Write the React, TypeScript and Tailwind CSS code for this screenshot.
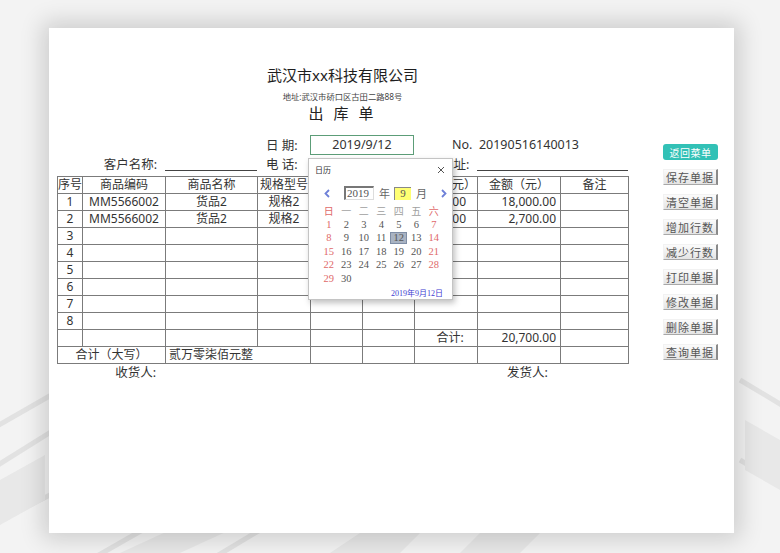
import React from "react";

type Row = {
  no: string;
  code?: string;
  name?: string;
  spec?: string;
  unit?: string;
  qty?: string;
  price?: string;
  amt?: string;
};

const rows: Row[] = [
  { no: "1", code: "MM5566002", name: "货品2", spec: "规格2", unit: "个", qty: "20", price: "900.00", amt: "18,000.00" },
  { no: "2", code: "MM5566002", name: "货品2", spec: "规格2", unit: "个", qty: "3", price: "900.00", amt: "2,700.00" },
  { no: "3" },
  { no: "4" },
  { no: "5" },
  { no: "6" },
  { no: "7" },
  { no: "8" },
];

const gridCols = "grid grid-cols-[25px_83px_92px_53px_52px_52px_63px_83px_68px]";

function Cell({ children, className = "" }: { children?: React.ReactNode; className?: string }) {
  return (
    <div className={`h-[17px] border-r border-b border-[#7b7b7b] flex items-center justify-center overflow-hidden whitespace-nowrap ${className}`}>
      {children}
    </div>
  );
}

const days: (number | null)[] = [
  1, 2, 3, 4, 5, 6, 7,
  8, 9, 10, 11, 12, 13, 14,
  15, 16, 17, 18, 19, 20, 21,
  22, 23, 24, 25, 26, 27, 28,
  29, 30, null, null, null, null, null,
];

function Calendar() {
  return (
    <div className="absolute left-[259px] top-[130px] w-[145px] h-[142px] bg-white border border-[#c4c4c4] shadow-[2px_3px_6px_rgba(0,0,0,0.25)] z-10 font-['Liberation_Serif','Noto_Sans_CJK_SC',serif]">
      {/* title bar */}
      <div className="h-[23px] flex items-center justify-between pl-[6px] pr-[6px] pb-[2px]">
        <span className="text-[8px] text-[#333] font-['Noto_Sans_CJK_SC',sans-serif]">日历</span>
        <svg width="8" height="8" viewBox="0 0 8 8" className="mr-[1px]">
          <path d="M1 1 L7 7 M7 1 L1 7" stroke="#555" strokeWidth="1" />
        </svg>
      </div>
      {/* year / month nav */}
      <div className="h-[22px] flex items-center pl-[15px] text-[11px] text-[#555]">
        <svg width="6" height="9" viewBox="0 0 6 9">
          <path d="M5 1 L1.5 4.5 L5 8" stroke="#6e80d8" strokeWidth="1.8" fill="none" />
        </svg>
        <div className="ml-[14px] w-[30px] h-[14px] border-t-2 border-l-2 border-[#777] border-r border-b border-r-[#ddd] border-b-[#ddd] flex items-center pl-[1px] leading-none">2019</div>
        <span className="ml-[5px] text-[11px] font-['Noto_Sans_CJK_SC',sans-serif] text-[#666]">年</span>
        <div className="ml-[4px] w-[17px] h-[13px] bg-[#ffff73] border-t border-l border-[#888] flex items-center justify-center leading-none">9</div>
        <span className="ml-[5px] text-[11px] font-['Noto_Sans_CJK_SC',sans-serif] text-[#666]">月</span>
        <svg width="6" height="9" viewBox="0 0 6 9" className="ml-[14px]">
          <path d="M1 1 L4.5 4.5 L1 8" stroke="#6e80d8" strokeWidth="1.8" fill="none" />
        </svg>
      </div>
      {/* weekdays */}
      <div className="ml-[11px] mt-[1px] grid grid-cols-[repeat(7,17.5px)] h-[12px] items-center text-[10px] font-['Noto_Sans_CJK_SC',sans-serif]">
        {["日", "一", "二", "三", "四", "五", "六"].map((w, i) => (
          <div key={w} className={`text-center leading-none ${i === 0 || i === 6 ? "text-[#e06a6a]" : "text-[#a0a0a0]"}`}>
            {w}
          </div>
        ))}
      </div>
      {/* days */}
      <div className="ml-[11px] mt-[1px] grid grid-cols-[repeat(7,17.5px)] auto-rows-[13.5px] text-[10.5px]">
        {days.map((d, i) => {
          const weekend = i % 7 === 0 || i % 7 === 6;
          return (
            <div key={i} className="flex items-center justify-center">
              {d === 12 ? (
                <span className="w-[17px] h-[12px] bg-[#a9b3c2] border border-[#7f8ea6] flex items-center justify-center text-[#555] leading-none">{d}</span>
              ) : (
                <span className={`leading-none ${weekend ? "text-[#e06a6a]" : "text-[#555]"}`}>{d ?? ""}</span>
              )}
            </div>
          );
        })}
      </div>
      <div className="mt-[2px] pr-[9px] text-right text-[8px] text-[#3d3dd1] leading-[12px]">2019年9月12日</div>
    </div>
  );
}

const btn =
  "w-[55px] h-[16px] flex items-center justify-center text-[11px] tracking-[1px] text-[#555] bg-gradient-to-b from-[#fbfbfb] to-[#e4e4e4] border-t border-l border-[#f2f2f2] border-r-2 border-b border-r-[#8a8a8a] border-b-[#a8a8a8] font-['Noto_Sans_CJK_SC',serif]";

export default function App() {
  return (
    <div className="relative w-[780px] h-[553px] overflow-hidden bg-[#f3f3f3] pt-[28px] pl-[49px] font-['Noto_Sans','Noto_Sans_CJK_SC',sans-serif] text-[#333]">
      {/* faint background geometry */}
      <svg className="absolute inset-0" width="780" height="553" viewBox="0 0 780 553">
        <g fill="none" stroke="#e2e2e2" strokeWidth="5">
          <path d="M-10 430 L60 390" />
          <path d="M-10 470 L70 420" />
          <path d="M0 520 L60 490" />
          <path d="M90 560 L160 520" />
          <path d="M210 560 L260 530" />
          <path d="M740 380 L790 410" />
          <path d="M740 460 L790 490" />
        </g>
        <g fill="#e8e8e8">
          <polygon points="0,480 45,455 45,500 0,525" />
          <polygon points="120,553 170,530 230,530 180,553" />
          <polygon points="330,553 360,533 420,533 400,553" />
          <polygon points="460,553 480,533 540,533 520,553" />
          <polygon points="745,420 780,440 780,490 745,470" />
        </g>
      </svg>

      <div className="relative w-[685px] h-[505px] bg-white shadow-[0_0_22px_6px_rgba(0,0,0,0.16)] flex">
        {/* sheet */}
        <div className="relative w-[579px] pl-[8px] pt-[37px]">
          <div className="w-[571px] text-center text-[15px] leading-[20px] text-[#1e1e1e]">武汉市xx科技有限公司</div>
          <div className="w-[571px] mt-[6px] text-center text-[8.3px] leading-[12px] text-[#444]">地址:武汉市硚口区古田二路88号</div>
          <div className="w-[571px] text-center text-[15px] leading-[20px] tracking-[3px] text-[#222]">出 库 单</div>

          {/* date row */}
          <div className={`${gridCols} mt-[12px] h-[20px] items-center text-[12.5px]`}>
            <div className="col-start-4 pl-[9px] pt-[2px] whitespace-nowrap">日 期:</div>
            <div className="col-span-2 h-[20px] border-[1.5px] border-[#5c9d78] flex items-center justify-center text-[12.5px]">2019/9/12</div>
            <div className="col-span-3 pl-[38px] whitespace-nowrap">No.&nbsp;&nbsp;20190516140013</div>
          </div>

          {/* customer row */}
          <div className={`${gridCols} h-[21px] text-[12.5px]`}>
            <div className="col-span-2 flex items-center justify-end pr-[8px] whitespace-nowrap">客户名称:</div>
            <div className="h-[16px] border-b border-[#444]"></div>
            <div className="pl-[9px] flex items-center whitespace-nowrap">电 话:</div>
            <div className="col-span-2"></div>
            <div className="pl-[27px] flex items-center whitespace-nowrap">地址:</div>
            <div className="col-span-2 h-[16px] border-b border-[#444]"></div>
          </div>

          {/* table */}
          <div className="w-[572px] border-l border-t border-[#7b7b7b] text-[12px]">
            <div className={gridCols}>
              <Cell>序号</Cell>
              <Cell>商品编码</Cell>
              <Cell>商品名称</Cell>
              <Cell>规格型号</Cell>
              <Cell>单位</Cell>
              <Cell>数量</Cell>
              <Cell>单价（元）</Cell>
              <Cell>金额（元）</Cell>
              <Cell>备注</Cell>
            </div>
            {rows.map((r) => (
              <div key={r.no} className={gridCols}>
                <Cell>{r.no}</Cell>
                <Cell>{r.code}</Cell>
                <Cell>{r.name}</Cell>
                <Cell>{r.spec}</Cell>
                <Cell>{r.unit}</Cell>
                <Cell>{r.qty}</Cell>
                <Cell className="justify-end pr-[11px]">{r.price}</Cell>
                <Cell className="justify-end pr-[4px]">{r.amt}</Cell>
                <Cell />
              </div>
            ))}
            <div className={gridCols}>
              <Cell />
              <Cell />
              <Cell />
              <Cell />
              <Cell />
              <Cell />
              <Cell className="pl-[8px]">合计:</Cell>
              <Cell className="justify-end pr-[4px]">20,700.00</Cell>
              <Cell />
            </div>
            <div className={gridCols}>
              <Cell className="col-span-2">合计（大写）</Cell>
              <Cell className="col-span-2 justify-start pl-[3px]">贰万零柒佰元整</Cell>
              <Cell />
              <Cell />
              <Cell />
              <Cell />
              <Cell />
            </div>
          </div>

          {/* signatures */}
          <div className={`${gridCols} h-[18px] text-[12.5px]`}>
            <div className="col-span-2 flex items-center justify-end pr-[9px]">收货人:</div>
            <div className="col-start-8 flex items-center pl-[30px] whitespace-nowrap">发货人:</div>
          </div>

          <Calendar />
        </div>

        {/* buttons */}
        <div className="ml-[35px] pt-[116px] flex flex-col gap-[9px]">
          <div className="w-[55px] h-[16px] rounded-[3px] bg-[#32c1b6] text-white text-[10px] tracking-[0.5px] flex items-center justify-center font-['Noto_Sans_CJK_SC',serif]">返回菜单</div>
          {["保存单据", "清空单据", "增加行数", "减少行数", "打印单据", "修改单据", "删除单据", "查询单据"].map((t) => (
            <div key={t} className={btn}>
              {t}
            </div>
          ))}
        </div>
      </div>
    </div>
  );
}
